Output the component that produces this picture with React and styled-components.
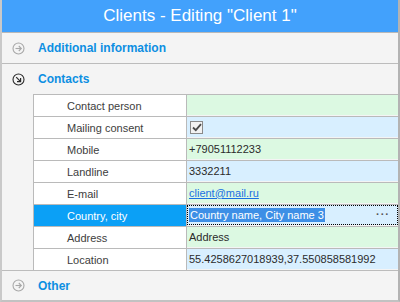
import React from 'react';
import styled, { createGlobalStyle } from 'styled-components';

const GlobalStyle = createGlobalStyle`
  html, body {
    margin: 0;
    padding: 0;
    background: #f4f4f4;
  }
  body {
    font-family: "Liberation Sans", Arial, sans-serif;
  }
`;

const Window = styled.div`
  width: 400px;
  height: 302px;
  box-sizing: border-box;
  border-left: 2px solid #c9c9c9;
  border-right: 2px solid #b3b3b3;
  border-bottom: 2px solid #c2c2c2;
  background: #f4f4f4;
  display: flex;
  flex-direction: column;
  overflow: hidden;
`;

const Title = styled.div`
  height: 32px;
  border-bottom: 1px solid #b8b8b8;
  background: #42a1fc;
  color: #fff;
  font-size: 17px;
  display: flex;
  align-items: center;
  justify-content: center;
  padding-bottom: 1px;
  box-sizing: border-box;
  height: 33px;
`;

const Section = styled.div`
  border-bottom: ${(p) => (p.$last ? 'none' : '1px solid #bcbcbc')};
`;

const GroupHeader = styled.div`
  height: ${(p) => p.$h}px;
  display: flex;
  align-items: center;
  padding-left: 10px;
  gap: 13px;
  color: #0d8fe2;
  font-weight: bold;
  font-size: 12px;
`;

const Grid = styled.div`
  margin-left: 31px;
  display: grid;
  grid-template-columns: 153px 1fr;
  border-left: 1px solid #bababa;
`;

const Label = styled.div`
  height: 21px;
  border-top: 1px solid #bababa;
  border-right: 1px solid #bababa;
  background: ${(p) => (p.$selected ? '#0ba0f6' : '#fff')};
  color: ${(p) => (p.$selected ? '#fff' : '#3d3d3d')};
  font-size: 11px;
  display: flex;
  align-items: center;
  padding-left: 33px;
`;

const Value = styled.div`
  height: 21px;
  box-sizing: border-box;
  border-top: 1px solid #bababa;
  background: ${(p) => (p.$alt ? '#d8efff' : '#dcf9e2')};
  color: #2b2b2b;
  font-size: 11px;
  display: flex;
  align-items: center;
  padding-left: 2px;
  position: relative;
`;

const FocusBox = styled.div`
  position: absolute;
  inset: 0;
  border: 1px dotted #000;
  display: flex;
  align-items: center;
  justify-content: space-between;
  padding: 0 7px 0 1px;
`;

const Selected = styled.span`
  background: #3d8fe6;
  color: #fff;
  padding: 1px 1px;
`;

const Dots = styled.span`
  color: #555;
  font-weight: bold;
  letter-spacing: 1px;
  font-size: 11px;
  margin-top: -3px;
`;

const Link = styled.span`
  color: #1a6fe3;
  text-decoration: underline;
`;

const Check = styled.span`
  width: 11px;
  height: 11px;
  border: 1px solid #8a8a8a;
  background: #f2f2f2;
  display: flex;
  align-items: center;
  justify-content: center;
  margin-left: 1px;
`;

const ArrowIcon = ({ open }) => (
  <svg width="13" height="13" viewBox="0 0 13 13">
    <circle
      cx="6.5"
      cy="6.5"
      r="5.5"
      fill="none"
      stroke={open ? '#2a2a2a' : '#a8a8a8'}
      strokeWidth="1.1"
    />
    {open ? (
      <g stroke="#2a2a2a" strokeWidth="1.2" fill="none">
        <path d="M4.2 4.2 L8.6 8.6" />
        <path d="M5 8.6 H8.6 V5" />
      </g>
    ) : (
      <g stroke="#a8a8a8" strokeWidth="1.1" fill="none">
        <path d="M3.5 6.5 H9.2" />
        <path d="M6.8 4 L9.3 6.5 L6.8 9" />
      </g>
    )}
  </svg>
);

const rows = [
  { label: 'Contact person', value: '' },
  { label: 'Mailing consent', value: 'check' },
  { label: 'Mobile', value: '+79051112233' },
  { label: 'Landline', value: '3332211' },
  { label: 'E-mail', value: 'client@mail.ru', link: true },
  { label: 'Country, city', value: 'Country name, City name 3', selected: true },
  { label: 'Address', value: 'Address' },
  { label: 'Location', value: '55.4258627018939,37.550858581992' },
];

const renderValue = (row) => {
  if (row.value === 'check') {
    return (
      <Check>
        <svg width="10" height="9" viewBox="0 0 10 9">
          <path d="M1 4.5 L3.8 7.2 L9 1.2" stroke="#4a4a4a" strokeWidth="1.8" fill="none" />
        </svg>
      </Check>
    );
  }
  if (row.link) return <Link>{row.value}</Link>;
  if (row.selected) {
    return (
      <FocusBox>
        <Selected>{row.value}</Selected>
        <Dots>···</Dots>
      </FocusBox>
    );
  }
  return row.value;
};

const App = () => (
  <>
    <GlobalStyle />
    <Window>
      <Title>Clients - Editing "Client 1"</Title>
      <Section>
        <GroupHeader $h={30}>
          <ArrowIcon />
          Additional information
        </GroupHeader>
      </Section>
      <Section>
        <GroupHeader $h={30}>
          <ArrowIcon open />
          Contacts
        </GroupHeader>
        <Grid>
          {rows.map((row, i) => (
            <React.Fragment key={row.label}>
              <Label $selected={row.selected}>{row.label}</Label>
              <Value $alt={i % 2 === 1}>{renderValue(row)}</Value>
            </React.Fragment>
          ))}
        </Grid>
      </Section>
      <Section $last>
        <GroupHeader $h={29}>
          <ArrowIcon />
          Other
        </GroupHeader>
      </Section>
    </Window>
  </>
);

export default App;
